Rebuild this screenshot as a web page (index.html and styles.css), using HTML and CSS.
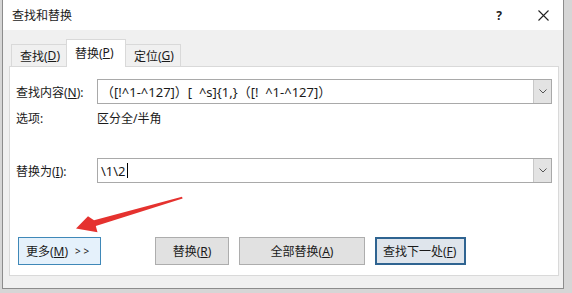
FILE: index.html
```html
<!DOCTYPE html>
<html lang="zh-CN">
<head>
  <meta charset="UTF-8">
  <title>查找和替换</title>
  <link rel="stylesheet" href="styles.css">
</head>
<body>
  <div class="dialog">
    <!-- Title bar -->
    <div class="titlebar">
      <span class="title">查找和替换</span>
      <span class="help">?</span>
      <span class="close">
        <svg width="11" height="11" viewBox="0 0 11 11"><path d="M0.5 0.5 L10.5 10.5 M10.5 0.5 L0.5 10.5" stroke="#222" stroke-width="1.1"/></svg>
      </span>
    </div>

    <div class="content">
      <div class="tabs">
        <div class="tab">查找(<u>D</u>)</div>
        <div class="tab active">替换(<u>P</u>)</div>
        <div class="tab">定位(<u>G</u>)</div>
      </div>

      <div class="panel">
        <div class="row find-row">
          <span class="label">查找内容(<u>N</u>):</span>
          <div class="combo">
            <span class="combo-text">（[!^1-^127]）[&nbsp;&nbsp;^s]{1,}（[!&nbsp;&nbsp;^1-^127]）</span>
            <span class="drop">
              <svg width="8" height="5" viewBox="0 0 8 5"><path d="M0.5 0.5 L4 4 L7.5 0.5" fill="none" stroke="#555" stroke-width="1"/></svg>
            </span>
          </div>
        </div>

        <div class="row options-row">
          <span class="label">选项:</span>
          <span class="option-value">区分全/半角</span>
        </div>

        <div class="row replace-row">
          <span class="label">替换为(<u>I</u>):</span>
          <div class="combo">
            <span class="combo-text">\1\2<span class="caret"></span></span>
            <span class="drop">
              <svg width="8" height="5" viewBox="0 0 8 5"><path d="M0.5 0.5 L4 4 L7.5 0.5" fill="none" stroke="#555" stroke-width="1"/></svg>
            </span>
          </div>
        </div>

        <div class="buttons">
          <button class="btn more-btn">更多(<u>M</u>)<span class="chevrons">&gt; &gt;</span></button>
          <button class="btn replace-btn">替换(<u>R</u>)</button>
          <button class="btn replace-all-btn">全部替换(<u>A</u>)</button>
          <button class="btn next-btn">查找下一处(<u>F</u>)</button>
        </div>
      </div>
    </div>
  </div>

  <!-- Red pointer arrow drawn over the dialog -->
  <svg class="arrow" width="572" height="293" viewBox="0 0 572 293">
    <path d="M182 196.8 L94 220.3 L88 216.3 L76 228.5 L97.5 232.2 L95.8 226 L182.6 198.6 Z" fill="#e5322f"/>
  </svg>
</body>
</html>
```

FILE: styles.css
```css
body {
margin: 0;
padding: 0;
background: #d6d6d6;
font-family: "Noto Sans", "Noto Sans CJK SC", sans-serif;
font-size: 12px;
color: #1a1a1a;
position: relative;
width: 572px;
height: 293px;
overflow: hidden;
}

.dialog {
margin-left: 2px;
width: 560px;
height: 288px;
background: #f0f0f0;
border: 1px solid #8c8c8c;
border-top: none;
display: flex;
flex-direction: column;
}

.titlebar {
height: 30px;
background: #ffffff;
display: flex;
align-items: center;
padding-left: 9px;
}

.title {
flex: 1;
font-size: 12px;
}

.help {
font-size: 12px;
font-weight: bold;
color: #222;
margin-right: 36px;
}

.close {
display: flex;
margin-right: 14px;
}

.content {
flex: 1;
padding: 9px 4px 12px 6px;
display: flex;
flex-direction: column;
}

.tabs {
display: flex;
align-items: flex-end;
height: 27px;
padding-left: 2px;
position: relative;
z-index: 2;
}

.tab {
height: 22px;
padding: 0 8px;
display: flex;
align-items: center;
background: #f0f0f0;
border: 1px solid #d9d9d9;
border-bottom: none;
box-sizing: border-box;
width: 56px;
white-space: nowrap;
}

.tab + .tab {
margin-left: -1px;
}

.tab.active {
height: 28px;
width: 60px;
background: #ffffff;
margin-bottom: -1px;
padding-bottom: 2px;
}

.panel {
height: 210px;
box-sizing: border-box;
background: #ffffff;
border: 1px solid #d9d9d9;
padding: 12px 6px 10px 6px;
display: flex;
flex-direction: column;
}

.row {
display: flex;
align-items: center;
}

.label {
width: 81px;
flex-shrink: 0;
}

.combo {
flex: 1;
height: 25px;
box-sizing: border-box;
border: 1px solid #a9a9a9;
display: flex;
align-items: stretch;
}

.combo-text {
flex: 1;
display: flex;
align-items: center;
padding-left: 3px;
white-space: nowrap;
font-size: 13px;
}

.caret {
display: inline-block;
width: 1px;
height: 15px;
background: #000;
margin-left: 1px;
}

.drop {
width: 17px;
background: #e3e3e3;
border-left: 1px solid #c8c8c8;
display: flex;
align-items: center;
justify-content: center;
}

.options-row {
margin-top: 4px;
height: 20px;
}

.replace-row {
margin-top: 30px;
}

.buttons {
margin-top: 54px;
display: flex;
padding-left: 2px;
}

.btn {
height: 28px;
font-family: inherit;
font-size: 12px;
color: #1a1a1a;
background: #e1e1e1;
border: 1px solid #adadad;
padding: 0;
display: flex;
align-items: center;
justify-content: center;
}

.more-btn {
width: 83px;
background: #e5f1fb;
border-color: #3f88b8;
justify-content: flex-start;
padding-left: 7px;
}

.chevrons {
font-size: 10px;
margin-left: 7px;
}

.replace-btn {
width: 74px;
margin-left: 54px;
}

.replace-all-btn {
width: 126px;
margin-left: 10px;
}

.next-btn {
width: 91px;
margin-left: 10px;
border: 2px solid #2f6491;
background: #dfe5ec;
justify-content: flex-start;
padding-left: 6px;
}

.arrow {
position: absolute;
left: 0;
top: 0;
pointer-events: none;
}
```
